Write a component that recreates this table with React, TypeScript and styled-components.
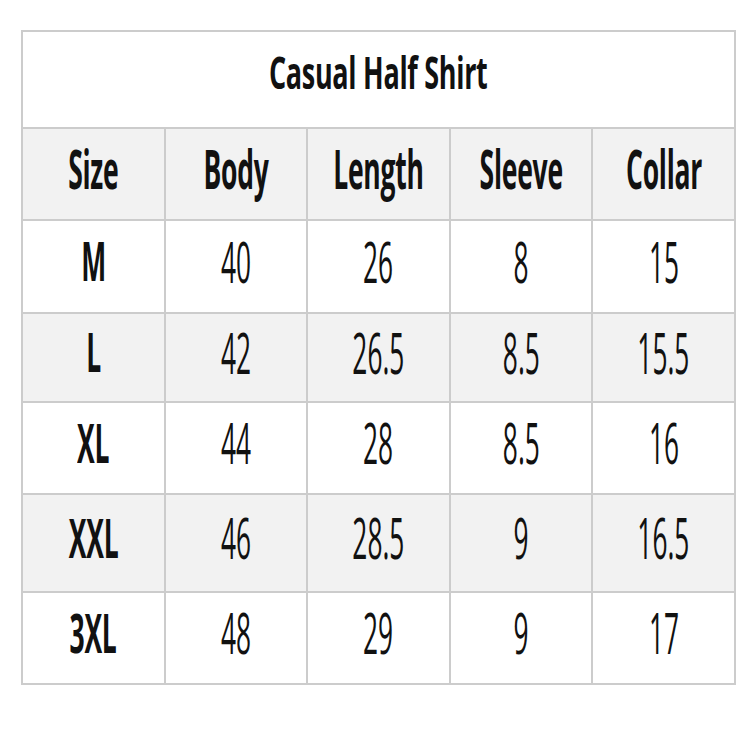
import React from "react";
import styled, { createGlobalStyle } from "styled-components";

const Global = createGlobalStyle`
  html, body { margin: 0; padding: 0; background: #ffffff; }
  body { font-family: "Open Sans", "Noto Sans", sans-serif; color: #111111; }
`;

const Grid = styled.div`
  display: grid;
  grid-template-columns: repeat(5, 1fr);
  grid-template-rows: 95px 90px 91px 87px 90px 96px 90px;
  gap: 2px;
  padding: 2px;
  margin: 30px 0 0 21px;
  width: 715px;
  box-sizing: border-box;
  background: #cccccc;
`;

const Cell = styled.div<{ $shaded?: boolean; $lift?: number }>`
  display: flex;
  align-items: center;
  justify-content: center;
  background: ${(p) => (p.$shaded ? "#f2f2f2" : "#ffffff")};
  padding-bottom: ${(p) => p.$lift ?? 12}px;
  box-sizing: border-box;
  overflow: hidden;
`;

const TitleCell = styled(Cell)`
  grid-column: 1 / -1;
`;

const Text = styled.span<{ $size: number; $bold?: boolean; $squeeze: number }>`
  display: inline-block;
  font-size: ${(p) => p.$size}px;
  font-weight: ${(p) => (p.$bold ? 700 : 400)};
  line-height: 1;
  white-space: nowrap;
  transform: scaleX(${(p) => p.$squeeze});
  letter-spacing: ${(p) => (p.$bold ? "-0.5px" : "0")};
`;

const headers = ["Size", "Body", "Length", "Sleeve", "Collar"];
const rows = [
  ["M", "40", "26", "8", "15"],
  ["L", "42", "26.5", "8.5", "15.5"],
  ["XL", "44", "28", "8.5", "16"],
  ["XXL", "46", "28.5", "9", "16.5"],
  ["3XL", "48", "29", "9", "17"],
];

export default function App() {
  return (
    <>
      <Global />
      <Grid>
        <TitleCell $lift={17}>
          <Text $size={45} $bold $squeeze={0.6}>
            Casual Half Shirt
          </Text>
        </TitleCell>
        {headers.map((h) => (
          <Cell key={h} $shaded $lift={12}>
            <Text $size={53} $bold $squeeze={0.5}>
              {h}
            </Text>
          </Cell>
        ))}
        {rows.map((r, i) =>
          r.map((v, j) => (
            <Cell key={`${i}-${j}`} $shaded={i % 2 === 1} $lift={12}>
              <Text $size={j === 0 ? 53 : 56} $bold={j === 0} $squeeze={j === 0 ? 0.5 : 0.47}>
                {v}
              </Text>
            </Cell>
          ))
        )}
      </Grid>
    </>
  );
}
